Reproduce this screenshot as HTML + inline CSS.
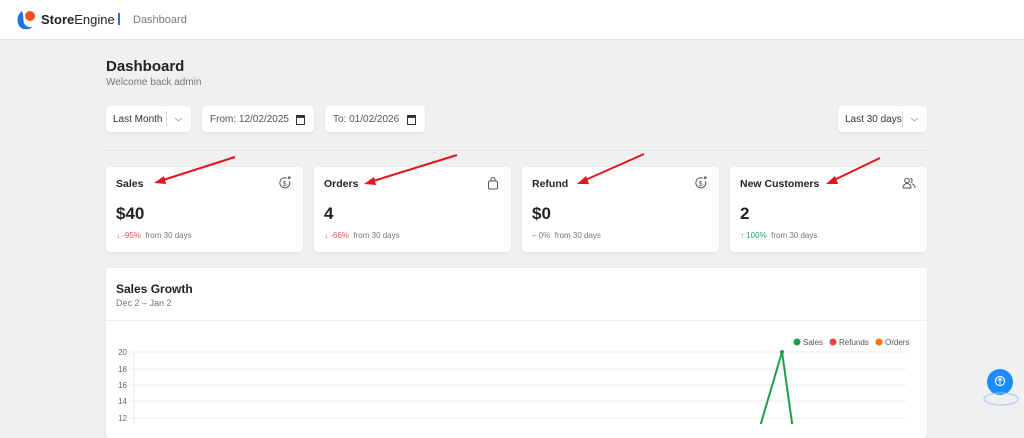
<!DOCTYPE html><html><head><style>
body{margin:0;width:1024px;height:424px;overflow:hidden;background:#f0f0f1;font-family:"Liberation Sans",sans-serif;position:relative}
.top{position:absolute;left:0;top:0;width:1024px;height:39px;background:#fff;border-bottom:1px solid #e4e4e4}
.box{position:absolute;background:#fff;border-radius:4px;box-shadow:0 1px 2px rgba(0,0,0,.08)}
.t{position:absolute;white-space:nowrap}
.ic{position:absolute;left:172px;top:9px}
</style></head><body>
<div class="top">
<svg style="position:absolute;left:15px;top:9px" width="22" height="22" viewBox="0 0 22 22"><path d="M7 2C2 6 1 13 5 18c3 3 9 3 13 0-4 1-8-1-9-4-1-3 0-6-2-12z" fill="#1a73e8"/><circle cx="15" cy="7" r="5" fill="#f4511e"/></svg>
<div class="t" style="left:41px;top:12px;font-size:13px;font-weight:bold;color:#222">Store<span style="font-weight:normal">Engine</span></div>
<div style="position:absolute;left:118px;top:13px;width:2px;height:12px;background:#1a73e8"></div>
<div class="t" style="left:133px;top:14px;font-size:11px;color:#777">Dashboard</div>
</div>
<div class="t" style="left:106px;top:58px;font-size:15px;font-weight:bold;color:#222">Dashboard</div>
<div class="t" style="left:106px;top:77px;font-size:10px;color:#777">Welcome back admin</div>
<div class="box" style="left:106px;top:106px;width:85px;height:26px"><span class="t" style="left:7px;top:8px;font-size:10px;color:#333">Last Month</span><span style="position:absolute;left:60px;top:5px;width:1px;height:16px;background:#ddd"></span><svg style="position:absolute;left:68px;top:11px" width="9" height="5"><path d="M1 1l3.5 3L8 1" fill="none" stroke="#aaa"/></svg></div>
<div class="box" style="left:202px;top:106px;width:112px;height:26px"><span class="t" style="left:8px;top:8px;font-size:10px;color:#555">From: 12/02/2025</span><span style="position:absolute;left:94px;top:9px;width:7px;height:6px;border:1.5px solid #333;border-top-width:3px"></span></div>
<div class="box" style="left:325px;top:106px;width:100px;height:26px"><span class="t" style="left:8px;top:8px;font-size:10px;color:#555">To: 01/02/2026</span><span style="position:absolute;left:82px;top:9px;width:7px;height:6px;border:1.5px solid #333;border-top-width:3px"></span></div>
<div class="box" style="left:838px;top:106px;width:89px;height:26px"><span class="t" style="left:7px;top:8px;font-size:10px;color:#333">Last 30 days</span><span style="position:absolute;left:64px;top:5px;width:1px;height:16px;background:#ddd"></span><svg style="position:absolute;left:72px;top:11px" width="9" height="5"><path d="M1 1l3.5 3L8 1" fill="none" stroke="#aaa"/></svg></div>
<div style="position:absolute;left:106px;top:150px;width:821px;height:1px;background:#e2e2e2"></div>

<div class="box" style="left:106px;top:167px;width:197px;height:85px"><span class="t" style="left:10px;top:11px;font-size:10.5px;font-weight:bold;color:#222">Sales</span><svg class="ic" width="14" height="14" viewBox="0 0 14 14"><path d="M11.5 5A5 5 0 1 1 9 2.3" fill="none" stroke="#555"/><path d="M10 1l2 0 0 2M12 1l-2 2" fill="none" stroke="#555" stroke-width=".9"/><text x="4.6" y="10" font-size="7" fill="#555" font-family="Liberation Sans">$</text></svg><span class="t" style="left:10px;top:37px;font-size:17px;font-weight:bold;color:#222">$40</span><span class="t" style="left:10px;top:64px;font-size:8px;color:#777"><span style="color:#e55">↓ -95%</span>&nbsp; from 30 days</span></div>
<div class="box" style="left:314px;top:167px;width:197px;height:85px"><span class="t" style="left:10px;top:11px;font-size:10.5px;font-weight:bold;color:#222">Orders</span><svg class="ic" width="14" height="14" viewBox="0 0 14 14"><rect x="2.5" y="5" width="9" height="8" rx="1.5" fill="none" stroke="#555"/><path d="M5 5V3.5a2 2 0 0 1 4 0V5" fill="none" stroke="#555"/></svg><span class="t" style="left:10px;top:37px;font-size:17px;font-weight:bold;color:#222">4</span><span class="t" style="left:10px;top:64px;font-size:8px;color:#777"><span style="color:#e55">↓ -66%</span>&nbsp; from 30 days</span></div>
<div class="box" style="left:522px;top:167px;width:197px;height:85px"><span class="t" style="left:10px;top:11px;font-size:10.5px;font-weight:bold;color:#222">Refund</span><svg class="ic" width="14" height="14" viewBox="0 0 14 14"><path d="M11.5 5A5 5 0 1 1 9 2.3" fill="none" stroke="#555"/><path d="M10 1l2 0 0 2M12 1l-2 2" fill="none" stroke="#555" stroke-width=".9"/><text x="4.6" y="10" font-size="7" fill="#555" font-family="Liberation Sans">$</text></svg><span class="t" style="left:10px;top:37px;font-size:17px;font-weight:bold;color:#222">$0</span><span class="t" style="left:10px;top:64px;font-size:8px;color:#777">– 0%&nbsp; from 30 days</span></div>
<div class="box" style="left:730px;top:167px;width:197px;height:85px"><span class="t" style="left:10px;top:11px;font-size:10.5px;font-weight:bold;color:#222">New Customers</span><svg class="ic" width="14" height="14" viewBox="0 0 14 14"><circle cx="5" cy="4.5" r="2.3" fill="none" stroke="#555"/><path d="M1 12c0-3 2-4.5 4-4.5s4 1.5 4 4.5z" fill="none" stroke="#555"/><path d="M8.5 2.3a2.3 2.3 0 0 1 0 4.4M10 7.8c1.7.5 3 1.8 3 4.2" fill="none" stroke="#555"/></svg><span class="t" style="left:10px;top:37px;font-size:17px;font-weight:bold;color:#222">2</span><span class="t" style="left:10px;top:64px;font-size:8px;color:#777"><span style="color:#2a7">↑ 100%</span>&nbsp; from 30 days</span></div>

<div class="box" style="left:106px;top:268px;width:821px;height:170px">
<span class="t" style="left:10px;top:14px;font-size:12px;font-weight:bold;color:#222">Sales Growth</span>
<span class="t" style="left:10px;top:30px;font-size:9px;color:#777">Dec 2 – Jan 2</span>
<div style="position:absolute;left:0;top:52px;width:821px;height:1px;background:#eee"></div>
</div>
<svg style="position:absolute;left:0;top:0" width="1024" height="424">
<g font-size="8" fill="#666" font-family="Liberation Sans" text-anchor="end">
<text x="127" y="355">20</text><text x="127" y="372">18</text><text x="127" y="388">16</text><text x="127" y="404">14</text><text x="127" y="421">12</text></g>
<g stroke="#eee"><line x1="130" y1="352" x2="906" y2="352"/><line x1="130" y1="369" x2="906" y2="369"/><line x1="130" y1="385" x2="906" y2="385"/><line x1="130" y1="401" x2="906" y2="401"/><line x1="130" y1="418" x2="906" y2="418"/><line x1="134" y1="352" x2="134" y2="424"/></g>
<polyline points="759,430 782,352 793,430" fill="none" stroke="#1e9e4a" stroke-width="2"/><circle cx="782" cy="352" r="2" fill="#1e9e4a"/>
<g font-size="8" fill="#555" font-family="Liberation Sans"><circle cx="797" cy="342" r="3.5" fill="#1e9e4a"/><text x="803" y="345">Sales</text><circle cx="833" cy="342" r="3.5" fill="#ef4444"/><text x="839" y="345">Refunds</text><circle cx="879" cy="342" r="3.5" fill="#f97316"/><text x="885" y="345">Orders</text></g>
<circle cx="1000" cy="382" r="13" fill="#1a8cff"/><circle cx="1000" cy="381" r="4.5" fill="none" stroke="#fff" stroke-width="1.2"/><path d="M1000 383.5v-5M998 380.5l2-2 2 2" fill="none" stroke="#fff" stroke-width="1"/><ellipse cx="1001" cy="399" rx="17" ry="6" fill="none" stroke="#9cc8f0"/>
<g stroke="#e8141c" stroke-width="2" fill="#e8141c">
<line x1="235" y1="157" x2="160" y2="181"/><polygon points="154,183 164,176 166,184" stroke="none"/>
<line x1="457" y1="155" x2="370" y2="182"/><polygon points="364,184 374,177 376,185" stroke="none"/>
<line x1="644" y1="154" x2="583" y2="181"/><polygon points="577,184 586,176 589,184" stroke="none"/>
<line x1="880" y1="158" x2="832" y2="181"/><polygon points="826,184 835,176 838,184" stroke="none"/>
</g></svg>
</body></html>
